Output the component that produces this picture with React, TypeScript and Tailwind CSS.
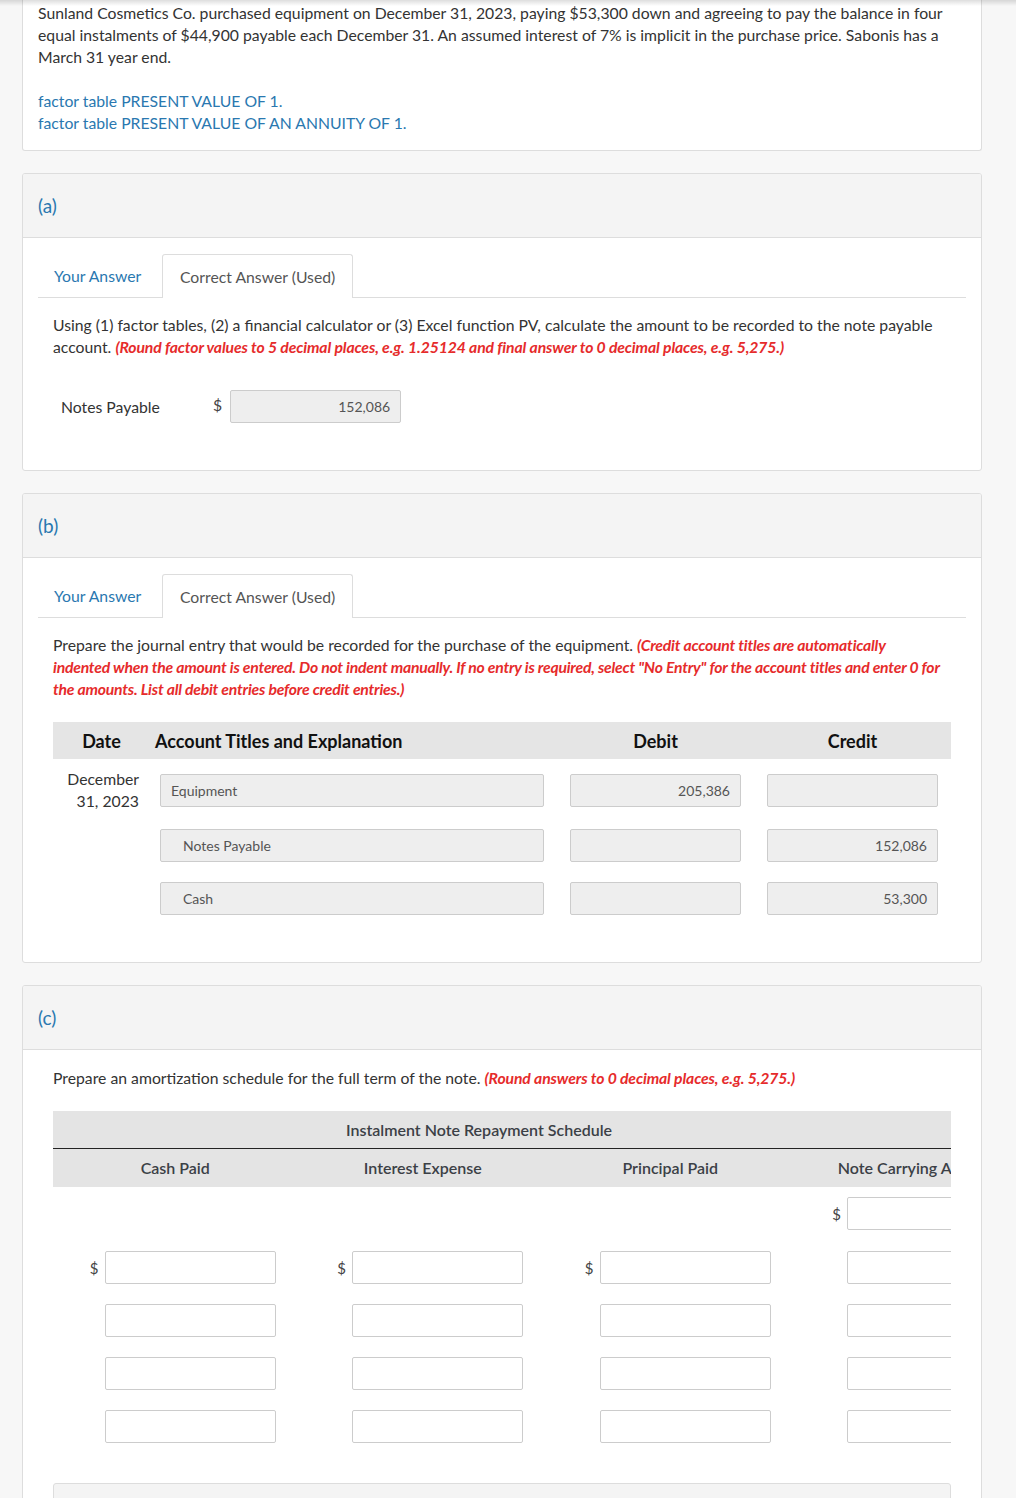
import React from "react";

const blue = "text-[#2a78b0]";
const red = "font-bold italic tracking-[-0.12px] text-[#e62b2b]";

function CardHeader({ label }: { label: string }) {
  return (
    <div className="flex h-[64px] items-center border-b border-[#dddddd] bg-[#f4f4f4] px-[15px]">
      <span className={`text-[19px] ${blue}`}>{label}</span>
    </div>
  );
}

function Tabs() {
  return (
    <div className="mt-[16px] flex border-b border-[#dddddd]">
      <div className={`flex h-[43px] w-[124px] items-center pl-[16px] ${blue}`}>Your Answer</div>
      <div className="-mb-px flex h-[44px] items-center rounded-t-[3px] border border-b-0 border-[#dddddd] bg-white px-[17px] text-[#555]">
        Correct Answer (Used)
      </div>
    </div>
  );
}

function Field({ value = "", indent = false, left = false, className = "" }: { value?: string; indent?: boolean; left?: boolean; className?: string }) {
  return (
    <div
      className={`flex h-[33px] items-center rounded-[2px] border border-[#cccccc] bg-[#eeeeee] text-[14px] text-[#555] ${
        left ? (indent ? "pl-[22px]" : "pl-[10px]") : "justify-end pr-[10px]"
      } ${className}`}
    >
      {value}
    </div>
  );
}

function BlankInput({ dollar = false }: { dollar?: boolean }) {
  return (
    <div className="flex h-[33px] items-center justify-end pr-[25px]">
      {dollar && <span className="mr-[6px] text-[15px] text-[#444]">$</span>}
      <div className="h-[33px] w-[171px] shrink-0 rounded-[2px] border border-[#cccccc] bg-white" />
    </div>
  );
}

const journal = [
  { title: "Equipment", indent: false, debit: "205,386", credit: "" },
  { title: "Notes Payable", indent: true, debit: "", credit: "152,086" },
  { title: "Cash", indent: true, debit: "", credit: "53,300" },
];

export default function App() {
  return (
    <div className="relative min-h-screen bg-[#f7f7f7] text-[15.75px] leading-[22px] text-[#333]" style={{ fontFamily: "Lato, 'Open Sans', sans-serif" }}>
      <div className="pointer-events-none absolute inset-x-0 top-0 h-[6px] bg-gradient-to-b from-[#00000022] to-transparent" />

      <div className="pb-[40px] pl-[22px] pr-[34px]">
        {/* problem statement */}
        <div className="rounded-b-[3px] border-x border-b border-[#dddddd] bg-white px-[15px] pb-[16px] pt-[2px]">
          <p>
            Sunland Cosmetics Co. purchased equipment on December 31, 2023, paying $53,300 down and agreeing to pay the balance in four
            equal instalments of $44,900 payable each December 31. An assumed interest of 7% is implicit in the purchase price. Sabonis has a
            March 31 year end.
          </p>
          <div className={`mt-[22px] ${blue}`}>
            <div>factor table PRESENT VALUE OF 1.</div>
            <div>factor table PRESENT VALUE OF AN ANNUITY OF 1.</div>
          </div>
        </div>

        {/* (a) */}
        <div className="mt-[22px] overflow-hidden rounded-[3px] border border-[#dddddd] bg-white">
          <CardHeader label="(a)" />
          <div className="px-[15px] pb-[47px]">
            <Tabs />
            <p className="mt-[16px] px-[15px]">
              Using (1) factor tables, (2) a financial calculator or (3) Excel function PV, calculate the amount to be recorded to the note payable
              account. <span className={red}>(Round factor values to 5 decimal places, e.g. 1.25124 and final answer to 0 decimal places, e.g. 5,275.)</span>
            </p>
            <div className="mt-[32px] flex items-center pl-[23px]">
              <span className="w-[152px] text-[#333]">Notes Payable</span>
              <span className="-mt-[4px] mr-[8px] text-[#444]">$</span>
              <Field value="152,086" className="w-[171px]" />
            </div>
          </div>
        </div>

        {/* (b) */}
        <div className="mt-[22px] overflow-hidden rounded-[3px] border border-[#dddddd] bg-white">
          <CardHeader label="(b)" />
          <div className="px-[15px] pb-[47px]">
            <Tabs />
            <div className="px-[15px]">
              <p className="mt-[16px]">
                Prepare the journal entry that would be recorded for the purchase of the equipment.{" "}
                <span className="font-bold italic tracking-[-0.22px] text-[#e62b2b]">
                  (Credit account titles are automatically
                  <br />
                  indented when the amount is entered. Do not indent manually. If no entry is required, select "No Entry" for the account titles and enter 0 for the amounts. List all debit entries before credit entries.)
                </span>
              </p>

              <div className="mt-[22px]">
                <div className="grid h-[37px] grid-cols-[97px_407px_197px_197px] items-center bg-[#e5e5e5] text-[18px] font-bold text-[#111]">
                  <div className="text-center">Date</div>
                  <div className="pl-[5px]">Account Titles and Explanation</div>
                  <div className="text-center">Debit</div>
                  <div className="text-center">Credit</div>
                </div>
                {journal.map((r, i) => (
                  <div
                    key={r.title}
                    className={`grid grid-cols-[97px_407px_197px_197px] ${i === 0 ? "mt-[9px]" : i === 1 ? "mt-[17px]" : "mt-[20px]"}`}
                  >
                    <div className="pr-[11px] text-right text-[#333]">
                      {i === 0 && (
                        <>
                          December
                          <br />
                          31, 2023
                        </>
                      )}
                    </div>
                    <div className={`pl-[10px] pr-[13px] ${i === 0 ? "pt-[6px]" : ""}`}>
                      <Field value={r.title} left indent={r.indent} />
                    </div>
                    <div className={`px-[13px] ${i === 0 ? "pt-[6px]" : ""}`}>
                      <Field value={r.debit} />
                    </div>
                    <div className={`px-[13px] ${i === 0 ? "pt-[6px]" : ""}`}>
                      <Field value={r.credit} />
                    </div>
                  </div>
                ))}
              </div>
            </div>
          </div>
        </div>

        {/* (c) */}
        <div className="mt-[22px] overflow-hidden rounded-[3px] border border-[#dddddd] bg-white">
          <CardHeader label="(c)" />
          <div className="px-[30px] pb-[40px]">
            <p className="mt-[17px]">
              Prepare an amortization schedule for the full term of the note. <span className={red}>(Round answers to 0 decimal places, e.g. 5,275.)</span>
            </p>

            <div className="mt-[22px] overflow-hidden">
              <div className="w-[990px]">
                <div className="flex h-[38px] items-center border-b border-[#222] bg-[#e4e4e4] pl-[293px] text-[16px] font-semibold text-[#3b4046]">
                  Instalment Note Repayment Schedule
                </div>
                <div className="grid h-[38px] grid-cols-4 items-center bg-[#e4e4e4] text-center text-[16px] font-semibold text-[#3b4046]">
                  <div className="pr-[3px]">Cash Paid</div>
                  <div className="pr-[3px]">Interest Expense</div>
                  <div className="pr-[3px]">Principal Paid</div>
                  <div className="pr-[3px]">Note Carrying Amount</div>
                </div>
                <div className="mt-[10px] flex flex-col gap-[20px]">
                  <div className="grid grid-cols-4">
                    <div />
                    <div />
                    <div />
                    <BlankInput dollar />
                  </div>
                  {[0, 1, 2, 3].map((r) => (
                    <div key={r} className={`grid grid-cols-4 ${r === 0 ? "mt-px" : ""}`}>
                      <BlankInput dollar={r === 0} />
                      <BlankInput dollar={r === 0} />
                      <BlankInput dollar={r === 0} />
                      <BlankInput />
                    </div>
                  ))}
                </div>
              </div>
            </div>

            <div className="mt-[40px] h-[80px] rounded-[3px] border border-[#dddddd] bg-[#f4f4f4]" />
          </div>
        </div>
      </div>
    </div>
  );
}
